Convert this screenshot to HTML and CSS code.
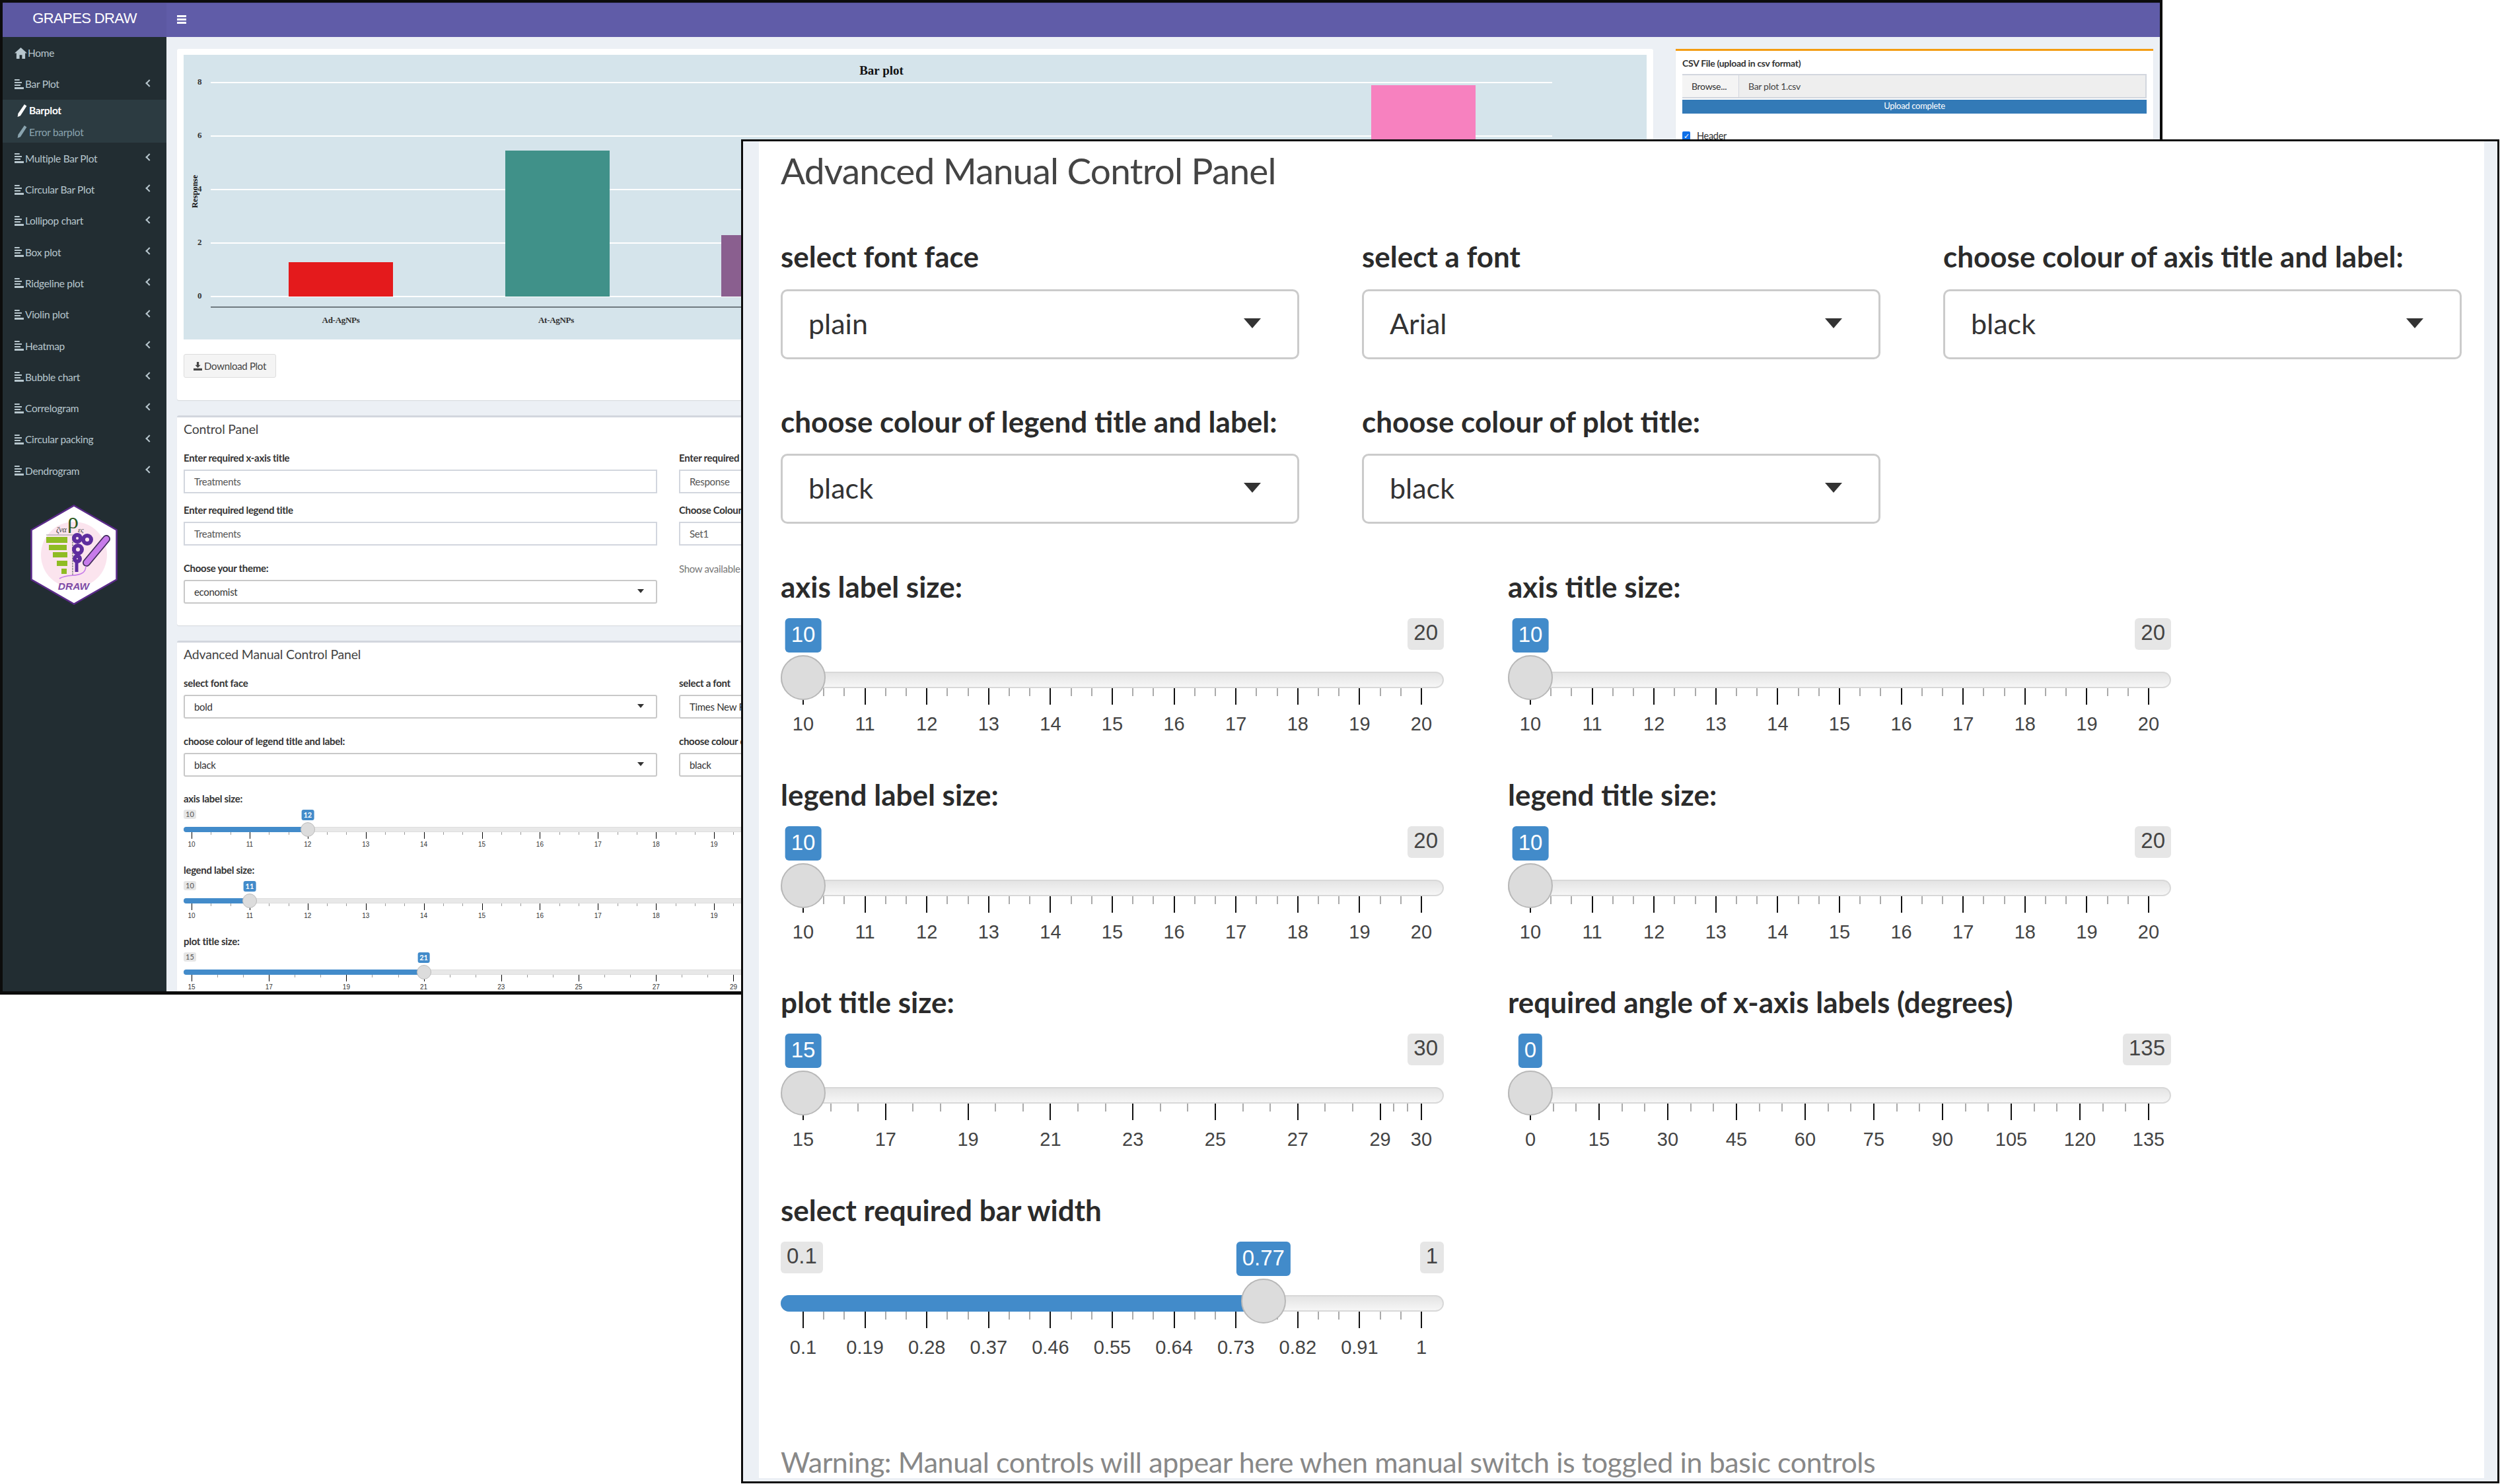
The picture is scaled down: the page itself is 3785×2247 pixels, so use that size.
FILE: index.html
```html
<!DOCTYPE html>
<html lang="en">
<head>
    <meta charset="UTF-8">
    <title>Grapes Draw</title>
    <link rel="stylesheet" href="styles.css">
</head>
<body>
    <!-- back window: the app itself -->
    <div class="win win-back">
        <header class="topbar">
            <div class="brand">GRAPES DRAW</div>
            <div class="burger"><span></span><span></span><span></span></div>
        </header>
        <div class="app">
            <aside class="sidebar">
                <a class="nav home"><svg viewBox="0 0 20 18"><path d="M10 0 0 9h3v9h5v-6h4v6h5V9h3z"/></svg>Home</a>
                <a class="nav"><i class="lines"></i>Bar Plot<b class="chev"></b></a>
                <div class="submenu">
                    <a class="sub on"><svg viewBox="0 0 16 22"><path d="M12 0l4 3L5 20l-5 2 1-6z"/></svg>Barplot</a>
                    <a class="sub"><svg viewBox="0 0 16 22"><path d="M12 0l4 3L5 20l-5 2 1-6z"/></svg>Error barplot</a>
                </div>
                <a class="nav"><i class="lines"></i>Multiple Bar Plot<b class="chev"></b></a>
                <a class="nav"><i class="lines"></i>Circular Bar Plot<b class="chev"></b></a>
                <a class="nav"><i class="lines"></i>Lollipop chart<b class="chev"></b></a>
                <a class="nav"><i class="lines"></i>Box plot<b class="chev"></b></a>
                <a class="nav"><i class="lines"></i>Ridgeline plot<b class="chev"></b></a>
                <a class="nav"><i class="lines"></i>Violin plot<b class="chev"></b></a>
                <a class="nav"><i class="lines"></i>Heatmap<b class="chev"></b></a>
                <a class="nav"><i class="lines"></i>Bubble chart<b class="chev"></b></a>
                <a class="nav"><i class="lines"></i>Correlogram<b class="chev"></b></a>
                <a class="nav"><i class="lines"></i>Circular packing<b class="chev"></b></a>
                <a class="nav"><i class="lines"></i>Dendrogram<b class="chev"></b></a>
                <svg class="logo" viewBox="0 0 132 152">
                    <path d="M66 1.500 130.500 38.500V113.500L66 150.500 1.500 113.500V38.500z" fill="#fff" stroke="#5b2a8a" stroke-width="2.500"/>
                    <circle cx="66" cy="76" r="50" fill="#fbe4ee"/>
                    <text x="39" y="42" font-size="12" fill="#444" font-family="Liberation Serif, serif" font-style="italic">ζνα</text>
                    <text x="56" y="36" font-size="34" fill="#2d5a1e" font-family="Liberation Serif, serif">ρ</text>
                    <text x="72" y="42" font-size="11" fill="#444" font-family="Liberation Serif, serif" font-style="italic">ες</text>
                    <path d="M24 46H66" stroke="#999" stroke-width="1"/>
                    <path d="M64 48V108" stroke="#888" stroke-width="1.500" stroke-dasharray="3 1"/>
                    <g fill="#8fbc24">
                        <rect x="24" y="49" width="32" height="9"/>
                        <rect x="28" y="61" width="27" height="8"/>
                        <rect x="34" y="72" width="22" height="8"/>
                        <rect x="40" y="85" width="16" height="8"/>
                        <rect x="47" y="97" width="8" height="8"/>
                    </g>
                    <g fill="none" stroke="#5e2d9e" stroke-width="6">
                        <circle cx="71" cy="51" r="5"/>
                        <circle cx="86" cy="53" r="6"/>
                        <circle cx="72" cy="68" r="6"/>
                        <circle cx="71" cy="82" r="4"/>
                    </g>
                    <path d="M70 88V102" stroke="#5e2d9e" stroke-width="5"/>
                    <path d="M85 88 115 52" stroke="#3f2a5a" stroke-width="12" stroke-linecap="round"/>
                    <path d="M85 88 115 52" stroke="#c77bea" stroke-width="8.500" stroke-linecap="round"/>
                    <path d="M44 112c14-8 24-2 34-8 4-2 6-5 6-11" fill="none" stroke="#c77bea" stroke-width="1.500"/>
                    <text x="65.500" y="129" font-size="15.500" font-weight="bold" font-style="italic" fill="#7e4ba6" text-anchor="middle" font-family="Liberation Sans, sans-serif">DRAW</text>
                </svg>
            </aside>
            <main class="content">
                <div class="left-col">
                    <section class="box plot-box">
                        <div class="plot">
                            <div class="plot-title">Bar plot</div>
                            <div class="plot-y">Response</div>
                            <div class="grid-line l8"><span>8</span></div>
                            <div class="grid-line l6"><span>6</span></div>
                            <div class="grid-line l4"><span>4</span></div>
                            <div class="grid-line l2"><span>2</span></div>
                            <div class="grid-line l0"><span>0</span></div>
                            <div class="bar bar-red"></div>
                            <div class="bar bar-teal"></div>
                            <div class="bar bar-purple"></div>
                            <div class="bar bar-pink"></div>
                            <div class="axis-line"></div>
                            <div class="xlabel xl1">Ad-AgNPs</div>
                            <div class="xlabel xl2">At-AgNPs</div>
                        </div>
                        <button class="dl-btn"><svg viewBox="0 0 16 16"><path d="M6 0h4v6h3L8 11 3 6h3zM0 12h16v4H0z"/></svg>Download Plot</button>
                    </section>
                    <section class="box small-panel panel-a">
                        <h3>Control Panel</h3>
                        <div class="small-row">
                            <div class="fld"><label>Enter required x-axis title</label><div class="txt">Treatments</div></div>
                            <div class="fld"><label>Enter required y-axis title</label><div class="txt">Response</div></div>
                        </div>
                        <div class="small-row">
                            <div class="fld"><label>Enter required legend title</label><div class="txt">Treatments</div></div>
                            <div class="fld"><label>Choose Colour palette</label><div class="txt">Set1</div></div>
                        </div>
                        <div class="small-row wide-gap">
                            <div class="fld"><label>Choose your theme:</label><div class="txt sel">economist</div></div>
                            <div class="fld"><span class="muted">Show available palettes</span></div>
                        </div>
                    </section>
                    <section class="box small-panel panel-b">
                        <h3>Advanced Manual Control Panel</h3>
                        <div class="small-row">
                            <div class="fld"><label>select font face</label><div class="txt sel">bold</div></div>
                            <div class="fld"><label>select a font</label><div class="txt sel">Times New Roman</div></div>
                        </div>
                        <div class="small-row wide-gap">
                            <div class="fld"><label>choose colour of legend title and label:</label><div class="txt sel">black</div></div>
                            <div class="fld"><label>choose colour of plot title:</label><div class="txt sel">black</div></div>
                        </div>
                        <div class="minis">
                            <div class="mini" data-min="10" data-max="20" data-val="12" data-span="10" data-step="1"><label>axis label size:</label></div>
                            <div class="mini" data-min="10" data-max="20" data-val="11" data-span="10" data-step="1"><label>legend label size:</label></div>
                            <div class="mini" data-min="15" data-max="30" data-val="21" data-span="15" data-step="2"><label>plot title size:</label></div>
                        </div>
                    </section>
                </div>
                <section class="box upload-box">
                    <label>CSV File (upload in csv format)</label>
                    <div class="file"><span class="browse">Browse...</span><span class="fname">Bar plot 1.csv</span></div>
                    <div class="progress">Upload complete</div>
                    <div class="check"><i>✓</i>Header</div>
                </section>
            </main>
        </div>
    </div>

    <!-- front window: enlarged control panel -->
    <div class="win win-front">
        <div class="strip"></div>
        <div class="panel">
            <h2>Advanced Manual Control Panel</h2>
            <div class="select-grid">
                <div class="field"><label>select font face</label><div class="select">plain</div></div>
                <div class="field"><label>select a font</label><div class="select">Arial</div></div>
                <div class="field"><label>choose colour of axis title and label:</label><div class="select">black</div></div>
                <div class="field"><label>choose colour of legend title and label:</label><div class="select">black</div></div>
                <div class="field"><label>choose colour of plot title:</label><div class="select">black</div></div>
            </div>
            <div class="slider-grid">
                <div class="slider" data-labels="10,11,12,13,14,15,16,17,18,19,20" data-val="10" data-from="10" data-to="20" data-pos="0"><label>axis label size:</label></div>
                <div class="slider" data-labels="10,11,12,13,14,15,16,17,18,19,20" data-val="10" data-from="10" data-to="20" data-pos="0"><label>axis title size:</label></div>
                <div class="slider" data-labels="10,11,12,13,14,15,16,17,18,19,20" data-val="10" data-from="10" data-to="20" data-pos="0"><label>legend label size:</label></div>
                <div class="slider" data-labels="10,11,12,13,14,15,16,17,18,19,20" data-val="10" data-from="10" data-to="20" data-pos="0"><label>legend title size:</label></div>
                <div class="slider" data-labels="15,17,19,21,23,25,27,29,30" data-range="15" data-val="15" data-from="15" data-to="30" data-pos="0"><label>plot title size:</label></div>
                <div class="slider" data-labels="0,15,30,45,60,75,90,105,120,135" data-val="0" data-from="0" data-to="135" data-pos="0"><label>required angle of x-axis labels (degrees)</label></div>
                <div class="slider" data-labels="0.1,0.19,0.28,0.37,0.46,0.55,0.64,0.73,0.82,0.91,1" data-val="0.77" data-from="0.1" data-to="1" data-pos="0.7444"><label>select required bar width</label></div>
            </div>
            <p class="warning">Warning: Manual controls will appear here when manual switch is toggled in basic controls</p>
        </div>
        <div class="strip strip-right"></div>
    </div>

    <script src="sliders.js"></script>
</body>
</html>
```

FILE: styles.css
```css
html, body {
    margin: 0;
    padding: 0;
    height: 100%;
    background-color: #fff;
    font-family: Lato, "Open Sans", sans-serif;
    color: #333;
    overflow: hidden;
}

label {
    display: block;
    font-weight: bold;
}

/* the two overlapping screenshots sit on a free canvas */
.win {
    position: absolute;
    box-sizing: border-box;
    overflow: hidden;
}

.win-back {
    left: 0;
    top: 0;
    width: 3274px;
    height: 1506px;
    border: 4px solid #0c0c0c;
    border-bottom-width: 5px;
    background-color: #ecf0f5;
}

.win-front {
    left: 1122px;
    top: 211px;
    width: 2662px;
    height: 2035px;
    border: 3px solid #0c0c0c;
    padding-bottom: 5px;
    display: flex;
    background-color: #ecf0f5;
}

/* back window header */
.topbar {
    display: flex;
    height: 52px;
    background-color: #605ca8;
    border-top: 1px solid #55519a;
    box-sizing: border-box;
}

.brand {
    width: 248px;
    background-color: #5c58a2;
    color: #fff;
    font-family: "Liberation Sans", sans-serif;
    font-size: 22px;
    letter-spacing: -0.6px;
    text-align: center;
    line-height: 46px;
}

.burger {
    margin: 18px 0 0 16px;
    width: 14px;
}

.burger span {
    display: block;
    height: 2.500px;
    margin-bottom: 2.500px;
    background-color: #fff;
}

.app {
    display: flex;
    height: 1449px;
}

.sidebar {
    width: 248px;
    flex-shrink: 0;
    background-color: #222d32;
    padding-top: 0.500px;
    color: #b8c7ce;
    font-size: 15.500px;
}

.nav {
    display: flex;
    align-items: center;
    height: 47.300px;
    padding-left: 18px;
    position: relative;
    color: #b8c7ce;
    letter-spacing: -0.3px;
}

.nav.home svg {
    width: 19px;
    height: 17px;
    fill: #b8c7ce;
    margin-right: 1px;
}

.lines {
    display: inline-block;
    width: 14px;
    height: 15px;
    margin-right: 2px;
    background:
        linear-gradient(#b8c7ce, #b8c7ce) 0 0 / 55% 2px no-repeat,
        linear-gradient(#b8c7ce, #b8c7ce) 0 4px / 80% 2px no-repeat,
        linear-gradient(#b8c7ce, #b8c7ce) 0 8px / 65% 2px no-repeat,
        linear-gradient(#b8c7ce, #b8c7ce) 0 12px / 100% 3px no-repeat;
}

.chev {
    position: absolute;
    right: 22px;
    top: 18px;
    width: 8px;
    height: 8px;
    border-left: 2.500px solid #b8c7ce;
    border-bottom: 2.500px solid #b8c7ce;
    transform: rotate(45deg);
    box-sizing: border-box;
}

.submenu {
    background-color: #2c3b41;
    height: 65px;
}

.sub {
    display: flex;
    align-items: center;
    height: 32.500px;
    padding-left: 22px;
    color: #8aa4af;
    letter-spacing: -0.3px;
}

.sub svg {
    width: 15px;
    height: 19px;
    margin-right: 3px;
    fill: #8aa4af;
}

.sub.on {
    color: #fff;
    font-weight: bold;
}

.sub.on svg {
    fill: #fff;
}

.logo {
    display: block;
    width: 132px;
    height: 152px;
    margin: 28px 0 0 42px;
}

/* back window content */
.content {
    flex: 1;
    display: flex;
    gap: 34px;
    padding: 18px 10px 0 16px;
    overflow: hidden;
}

.left-col {
    width: 2235px;
    flex-shrink: 0;
}

.box {
    background-color: #fff;
    box-shadow: 0 1px 1px rgba(0, 0, 0, 0.1);
    box-sizing: border-box;
}

.plot-box {
    height: 532px;
    padding: 9px 10px;
    border-radius: 3px;
}

.plot {
    position: relative;
    height: 431px;
    background-color: #d5e4eb;
    font-family: "Liberation Serif", serif;
    color: #333;
    font-weight: bold;
}

.plot-title {
    position: absolute;
    left: 0;
    right: 102px;
    top: 13px;
    text-align: center;
    font-size: 19px;
    color: #111;
}

.plot-y {
    position: absolute;
    left: -33px;
    top: 199px;
    width: 100px;
    height: 16px;
    line-height: 16px;
    text-align: center;
    font-size: 12.500px;
    color: #111;
    transform: rotate(-90deg);
}

.grid-line {
    position: absolute;
    left: 41px;
    width: 2031px;
    height: 2px;
    background-color: #fff;
}

.grid-line span {
    position: absolute;
    left: -20px;
    top: -8px;
    font-size: 13px;
    line-height: 16px;
}

.l8 { top: 41px; }
.l6 { top: 122px; }
.l4 { top: 203px; }
.l2 { top: 284px; }
.l0 { top: 365px; }

.bar {
    position: absolute;
    width: 158px;
    bottom: 65px;
}

.bar-red {
    left: 159px;
    height: 52px;
    background-color: #e41a1c;
}

.bar-teal {
    left: 487px;
    height: 221px;
    background-color: #409189;
}

.bar-purple {
    left: 814px;
    height: 93px;
    background-color: #8a5f8f;
}

.bar-pink {
    left: 1798px;
    height: 320px;
    background-color: #f781bf;
}

.axis-line {
    position: absolute;
    left: 41px;
    width: 2031px;
    top: 381px;
    height: 2px;
    background-color: #6f7a80;
}

.xlabel {
    position: absolute;
    top: 394px;
    font-size: 13px;
    width: 100px;
    text-align: center;
    letter-spacing: -0.3px;
}

.xl1 { left: 188px; }
.xl2 { left: 514px; }

.dl-btn {
    display: flex;
    align-items: center;
    gap: 3px;
    margin-top: 22px;
    width: 140px;
    height: 36px;
    padding: 0 14px;
    background-color: #f4f4f4;
    border: 1px solid #ddd;
    border-radius: 3px;
    color: #444;
    font-family: Lato, sans-serif;
    font-size: 15px;
    letter-spacing: -0.3px;
    white-space: nowrap;
}

.dl-btn svg {
    width: 15px;
    height: 15px;
    fill: #444;
}

.small-panel {
    padding: 3px 10px 0;
    border-top: 3px solid #d2d6de;
    border-radius: 3px;
}

.small-panel h3 {
    margin: 0;
    font-size: 19.500px;
    font-weight: normal;
    letter-spacing: -0.2px;
    color: #444;
    line-height: 30px;
}

.panel-a {
    margin-top: 23px;
    height: 318px;
}

.panel-b {
    margin-top: 23px;
    height: 600px;
}

.small-row {
    display: flex;
    gap: 33px;
    margin-top: 17px;
}

.small-panel h3 + .small-row {
    margin-top: 20px;
}

.small-row.wide-gap {
    margin-top: 26px;
}

.fld {
    width: 717px;
    flex-shrink: 0;
    font-size: 15px;
    letter-spacing: -0.3px;
}

.fld label {
    line-height: 17px;
    margin-bottom: 9px;
}

.muted {
    color: #777;
    line-height: 17px;
}

.txt {
    box-sizing: border-box;
    height: 36px;
    line-height: 32px;
    padding-left: 14px;
    border: 2px solid #d2d6de;
    color: #555;
    position: relative;
}

.txt.sel {
    border-color: #c8c8c8;
    border-radius: 3px;
    color: #333;
}

.txt.sel::after {
    content: "";
    position: absolute;
    right: 18px;
    top: 12px;
    border: 5px solid transparent;
    border-top: 6px solid #333;
    border-bottom: 0;
}

.minis {
    margin-top: 25px;
}

.mini {
    height: 108px;
}

.mini label {
    font-size: 15px;
    letter-spacing: -0.3px;
    line-height: 17px;
}

.mini-inner {
    position: relative;
    height: 72px;
    width: 2230px;
}

.mini-min {
    position: absolute;
    left: 0;
    top: 8px;
    padding: 0 3px;
    background-color: #e6e6e6;
    color: #555;
    border-radius: 3px;
    font-size: 11px;
    line-height: 14px;
}

.mini-val {
    position: absolute;
    top: 8px;
    transform: translateX(-50%);
    padding: 1px 3px;
    background-color: #428bca;
    color: #fff;
    border-radius: 3px;
    font-size: 11px;
    line-height: 14px;
    font-weight: bold;
    z-index: 2;
}

.mini-track {
    position: absolute;
    left: 0;
    right: 0;
    top: 34px;
    height: 8px;
    background-color: #e8e8e8;
    border: 1px solid #ddd;
    box-sizing: border-box;
    border-radius: 4px;
}

.mini-fill {
    position: absolute;
    left: 0;
    top: 34px;
    height: 8px;
    background-color: #428bca;
    border-radius: 4px 0 0 4px;
}

.mini-handle {
    position: absolute;
    top: 27px;
    width: 22px;
    height: 22px;
    margin-left: -11px;
    border-radius: 50%;
    background-color: #dcdcdc;
    border: 1px solid #bbb;
    box-sizing: border-box;
    z-index: 1;
}

.mini-tick {
    position: absolute;
    top: 42px;
    width: 1px;
    height: 10px;
    background-color: #000;
}

.mini-tick.minor {
    height: 4px;
    background-color: #999;
}

.mini-num {
    position: absolute;
    top: 55px;
    width: 40px;
    margin-left: -20px;
    text-align: center;
    font-family: "Liberation Sans", sans-serif;
    font-size: 10px;
    line-height: 12px;
    color: #333;
}

.upload-box {
    width: 723px;
    height: 1400px;
    flex-shrink: 0;
    border-top: 3px solid #f39c12;
    padding: 0 10px;
    font-size: 14px;
    letter-spacing: -0.3px;
}

.upload-box label {
    line-height: 18px;
    padding-top: 10px;
    padding-bottom: 7px;
}

.file {
    display: flex;
    height: 37px;
    line-height: 33px;
    border: 2px solid #d2d6de;
    border-left: 0;
    box-sizing: border-box;
}

.browse {
    width: 86px;
    padding-left: 14px;
    box-sizing: border-box;
    background-color: #f4f4f4;
    border-right: 1px solid #d2d6de;
    color: #333;
}

.fname {
    flex: 1;
    padding-left: 14px;
    background-color: #eee;
    color: #444;
}

.progress {
    height: 21px;
    margin-top: 2px;
    background-color: #337ab7;
    color: #fff;
    text-align: center;
    font-size: 13px;
    line-height: 19px;
}

.check {
    display: flex;
    align-items: center;
    gap: 10px;
    margin-top: 25px;
    font-size: 14.500px;
}

.check i {
    width: 12px;
    height: 14px;
    background-color: #0f6fe8;
    color: #fff;
    font-style: normal;
    font-size: 11px;
    line-height: 14px;
    text-align: center;
    border-radius: 2px;
}

/* front window */
.strip {
    width: 24px;
    flex-shrink: 0;
}

.strip-right {
    width: 20px;
}

.panel {
    flex: 1;
    display: flex;
    flex-direction: column;
    padding: 0 33px;
    background-color: #fff;
}

.panel h2 {
    margin: 0;
    padding-top: 13px;
    font-size: 55px;
    font-weight: normal;
    line-height: 62px;
    color: #444;
    letter-spacing: -0.8px;
}

.select-grid {
    display: grid;
    grid-template-columns: repeat(3, 785px);
    column-gap: 95px;
    row-gap: 67px;
    margin-top: 72px;
}

.field label {
    font-size: 44px;
    line-height: 54px;
    height: 54px;
    margin-bottom: 22.500px;
    color: #2b2b2b;
    white-space: nowrap;
}

.select {
    box-sizing: border-box;
    height: 106px;
    border: 3px solid #cbcbcb;
    border-radius: 10px;
    padding-left: 39px;
    font-size: 43px;
    line-height: 98px;
    color: #333;
    position: relative;
}

.select::after {
    content: "";
    position: absolute;
    right: 55px;
    top: 41px;
    border: 13.500px solid transparent;
    border-top: 15px solid #333;
    border-bottom: 0;
}

.slider-grid {
    display: grid;
    grid-template-columns: repeat(2, 1004px);
    column-gap: 97px;
    grid-auto-rows: 314.500px;
    margin-top: 68px;
}

.slider label {
    font-size: 44px;
    line-height: 54px;
    color: #2b2b2b;
    white-space: nowrap;
}

.slider-inner {
    position: relative;
    height: 220px;
}

.s-min, .s-max {
    position: absolute;
    top: 21px;
    height: 48px;
    line-height: 44px;
    padding: 0 9px;
    background-color: #e6e6e6;
    color: #444;
    border-radius: 6px;
    font-family: "Liberation Sans", sans-serif;
    font-size: 33px;
    box-sizing: border-box;
}

.s-min { left: 0; }
.s-max { right: 0; }

.s-val {
    position: absolute;
    top: 21px;
    height: 52px;
    line-height: 50px;
    padding: 0 9px;
    transform: translateX(-50%);
    background-color: #428bca;
    color: #fff;
    border-radius: 6px;
    font-family: "Liberation Sans", sans-serif;
    font-size: 33px;
    box-sizing: border-box;
    z-index: 3;
}

.s-track {
    position: absolute;
    left: 0;
    right: 0;
    top: 102px;
    height: 25px;
    background: linear-gradient(#e4e4e4, #f6f6f6);
    border: 2px solid #d8d8d8;
    box-sizing: border-box;
    border-radius: 13px;
}

.s-fill {
    position: absolute;
    left: 0;
    top: 102px;
    height: 25px;
    background-color: #428bca;
    border-radius: 13px 0 0 13px;
}

.s-handle {
    position: absolute;
    top: 77px;
    width: 68px;
    height: 68px;
    margin-left: -34px;
    border-radius: 50%;
    background-color: #dcdcdc;
    border: 2px solid #b8b8b8;
    box-sizing: border-box;
    z-index: 2;
}

.s-tick {
    position: absolute;
    top: 127px;
    width: 2px;
    margin-left: -1px;
    height: 25px;
    background-color: #111;
}

.s-tick.minor {
    height: 12px;
    background-color: #aaa;
}

.s-num {
    position: absolute;
    top: 163px;
    width: 100px;
    margin-left: -50px;
    text-align: center;
    font-family: "Liberation Sans", sans-serif;
    font-size: 29px;
    line-height: 36px;
    color: #444;
}

.warning {
    margin: auto 0 -3px;
    font-size: 43px;
    line-height: 54px;
    letter-spacing: -0.42px;
    color: #888;
    white-space: nowrap;
}
```

FILE: sliders.js
```js
// build track, ticks and labels for each slider from its data attributes
var LEFT = 34, RIGHT = 970, MINOR = 2;

function el(parent, cls, text) {
    var d = document.createElement('div');
    d.className = cls;
    if (text !== undefined) d.textContent = text;
    parent.appendChild(d);
    return d;
}

document.querySelectorAll('.slider').forEach(function (s) {
    var labels = s.dataset.labels.split(',');
    var span = RIGHT - LEFT;
    var box = el(s, 'slider-inner');
    var at = +s.dataset.pos;
    var x = LEFT + at * span;

    el(box, 's-track');
    var pos = labels.map(function (l, i) {
        if (s.dataset.range) return LEFT + (l - labels[0]) / s.dataset.range * span;
        return LEFT + i / (labels.length - 1) * span;
    });

    pos.forEach(function (p, i) {
        el(box, 's-tick').style.left = p + 'px';
        el(box, 's-num', labels[i]).style.left = p + 'px';
        if (i === pos.length - 1) return;
        for (var k = 1; k <= MINOR; k++) {
            var left = p + (pos[i + 1] - p) * k / (MINOR + 1);
            el(box, 's-tick minor').style.left = left + 'px';
        }
    });

    // the min badge hides behind the value badge when the handle is at the start
    if (at > 0) {
        el(box, 's-fill').style.width = x + 'px';
        el(box, 's-min', s.dataset.from);
    }
    el(box, 's-max', s.dataset.to);
    el(box, 's-val', s.dataset.val).style.left = x + 'px';
    el(box, 's-handle').style.left = x + 'px';
});

document.querySelectorAll('.mini').forEach(function (s) {
    var box = el(s, 'mini-inner');
    var from = +s.dataset.min, span = +s.dataset.span, step = +s.dataset.step;
    var unit = 87.9 * (span === 15 ? 0.6667 : 1);
    var x = 12 + (s.dataset.val - from) * unit;

    el(box, 'mini-track');
    el(box, 'mini-fill').style.width = x + 'px';
    for (var v = from; v <= +s.dataset.max; v += step) {
        var p = 12 + (v - from) * unit;
        el(box, 'mini-tick').style.left = p + 'px';
        el(box, 'mini-num', v).style.left = p + 'px';
        for (var k = 1; k <= 2; k++) {
            el(box, 'mini-tick minor').style.left = p + step * unit * k / 3 + 'px';
        }
    }
    el(box, 'mini-min', from);
    el(box, 'mini-val', s.dataset.val).style.left = x + 'px';
    el(box, 'mini-handle').style.left = x + 'px';
});
```
